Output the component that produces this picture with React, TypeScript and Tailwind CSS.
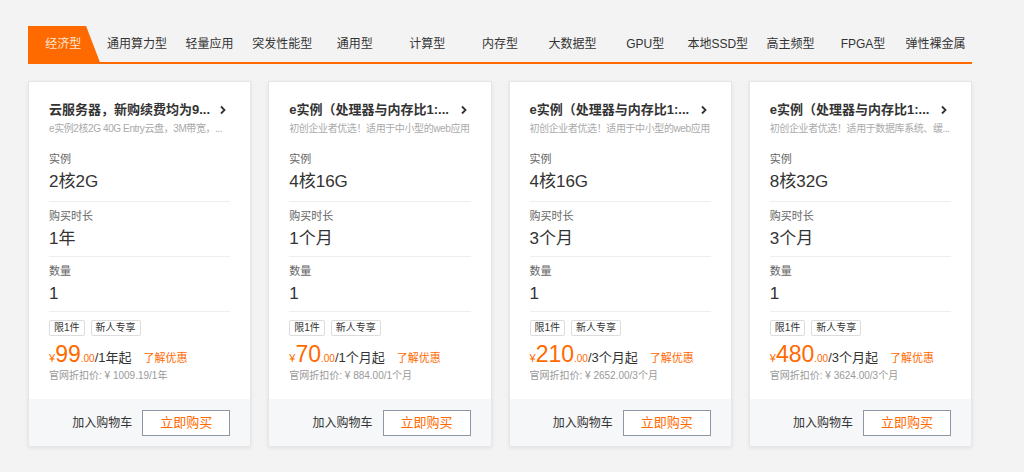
import React from "react";

const tabs = [
  "经济型",
  "通用算力型",
  "轻量应用",
  "突发性能型",
  "通用型",
  "计算型",
  "内存型",
  "大数据型",
  "GPU型",
  "本地SSD型",
  "高主频型",
  "FPGA型",
  "弹性裸金属",
];

type Plan = {
  title: string;
  desc: string;
  spec: string;
  term: string;
  qty: string;
  price: string;
  unit: string;
  orig: string;
};

const plans: Plan[] = [
  {
    title: "云服务器，新购续费均为9...",
    desc: "e实例2核2G 40G Entry云盘，3M带宽，...",
    spec: "2核2G",
    term: "1年",
    qty: "1",
    price: "99",
    unit: "/1年起",
    orig: "官网折扣价: ¥ 1009.19/1年",
  },
  {
    title: "e实例（处理器与内存比1:...",
    desc: "初创企业者优选！适用于中小型的web应用",
    spec: "4核16G",
    term: "1个月",
    qty: "1",
    price: "70",
    unit: "/1个月起",
    orig: "官网折扣价: ¥ 884.00/1个月",
  },
  {
    title: "e实例（处理器与内存比1:...",
    desc: "初创企业者优选！适用于中小型的web应用",
    spec: "4核16G",
    term: "3个月",
    qty: "1",
    price: "210",
    unit: "/3个月起",
    orig: "官网折扣价: ¥ 2652.00/3个月",
  },
  {
    title: "e实例（处理器与内存比1:...",
    desc: "初创企业者优选！适用于数据库系统、缓...",
    spec: "8核32G",
    term: "3个月",
    qty: "1",
    price: "480",
    unit: "/3个月起",
    orig: "官网折扣价: ¥ 3624.00/3个月",
  },
];

function Field({ label, value, first }: { label: string; value: string; first?: boolean }) {
  return (
    <div className={first ? "pt-[15px] pb-[7px] border-b border-[#eeeeee]" : "pt-[6px] pb-[5px] border-b border-[#eeeeee]"}>
      <div className="text-[11px] leading-4 text-[#666]">{label}</div>
      <div className="mt-[3px] text-[17px] leading-6 text-[#333]">{value}</div>
    </div>
  );
}

function Card({ p }: { p: Plan }) {
  return (
    <div className="flex flex-col bg-white border border-[#e6e6e6] shadow-[0_1px_4px_rgba(0,0,0,0.08)]">
      <div className="px-5 pt-[18px] pb-[16px]">
        <div className="flex items-center">
          <div className="flex-1 min-w-0 text-[13px] leading-5 font-bold text-[#333] whitespace-nowrap">
            {p.title}
          </div>
          <svg width="8" height="10" viewBox="0 0 8 10" className="ml-2 mr-[3px] shrink-0">
            <path d="M2 1.5 L5.5 5 L2 8.5" fill="none" stroke="#333" strokeWidth="1.8" />
          </svg>
        </div>
        <div className="mt-[2px] text-[10px] leading-[14px] tracking-[-0.4px] text-[#aaa] whitespace-nowrap">
          {p.desc}
        </div>
        <Field label="实例" value={p.spec} first />
        <Field label="购买时长" value={p.term} />
        <Field label="数量" value={p.qty} />
        <div className="mt-[8px] flex gap-[6px]">
          <span className="h-4 px-[4px] border border-[#dcdcdc] rounded-[2px] text-[10px] leading-[14px] text-[#333]">
            限1件
          </span>
          <span className="h-4 px-[4px] border border-[#dcdcdc] rounded-[2px] text-[10px] leading-[14px] text-[#333]">
            新人专享
          </span>
        </div>
        <div className="mt-[5px] flex items-baseline h-[26px] leading-[26px] whitespace-nowrap">
          <span className="text-[11px] text-[#ff6a00]">¥</span>
          <span className="text-[23px] text-[#ff6a00]">{p.price}</span>
          <span className="text-[10px] text-[#ff6a00]">.00</span>
          <span className="text-[13px] text-[#333]">{p.unit}</span>
          <span className="ml-3 text-[11px] text-[#ff6a00]">了解优惠</span>
        </div>
        <div className="mt-[2px] text-[10px] leading-[14px] text-[#999] whitespace-nowrap">{p.orig}</div>
      </div>
      <div className="mt-auto h-[47px] bg-[#f6f7f8] flex items-center justify-end gap-[10px] pr-5">
        <span className="text-[12px] text-[#333]">加入购物车</span>
        <button
          type="button"
          className="w-[88px] h-[26px] border border-[#8e96a6] bg-white text-[13px] text-[#ff6a00]"
        >
          立即购买
        </button>
      </div>
    </div>
  );
}

export default function App() {
  return (
    <div
      className="w-[1024px] h-[472px] bg-[#f3f3f3] overflow-hidden"
      style={{ fontFamily: '"Liberation Sans", "Noto Sans CJK SC", sans-serif' }}
    >
      <div className="ml-[28px] w-[944px] pt-[26px]">
        <div className="flex h-[38px] border-b-2 border-[#ff6a00]">
          {tabs.map((t, i) => (
            <div key={t} className="relative flex-1 flex items-center justify-center text-[12px] text-[#333]">
              {i === 0 && (
                <div className="absolute inset-0 -bottom-[2px] bg-[#ff6a00] [clip-path:polygon(0_0,80%_0,100%_100%,0_100%)]" />
              )}
              <span className={i === 0 ? "relative text-[#ffe6d4] -ml-[2px]" : "relative"}>{t}</span>
            </div>
          ))}
        </div>
        <div className="mt-[17px] grid grid-cols-4 gap-[17px] w-[944px]">
          {plans.map((p, i) => (
            <Card key={i} p={p} />
          ))}
        </div>
      </div>
    </div>
  );
}
